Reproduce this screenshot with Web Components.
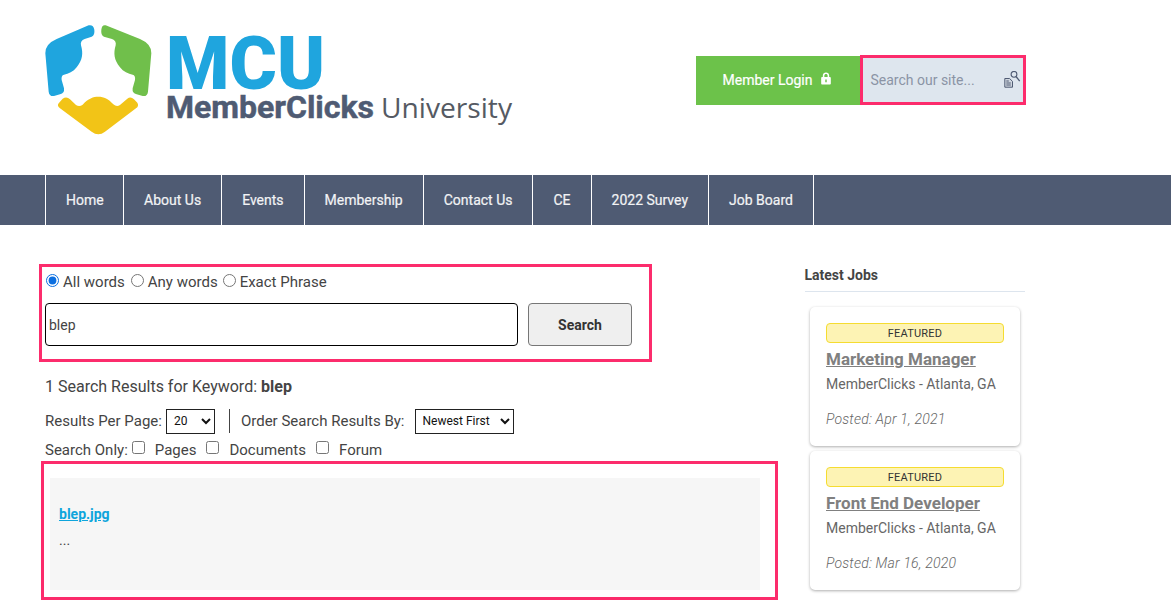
<!DOCTYPE html>
<html lang="en"><head><meta charset="utf-8"><title>MCU search</title>
<style>
html,body{margin:0;padding:0;background:#fff;overflow:hidden}
body{font-family:Roboto,"Liberation Sans",sans-serif;color:#444;height:600px}
</style></head><body>
<mc-header></mc-header>
<mc-nav>
  <mc-nav-item>Home</mc-nav-item><mc-nav-item>About Us</mc-nav-item><mc-nav-item>Events</mc-nav-item><mc-nav-item>Membership</mc-nav-item><mc-nav-item>Contact Us</mc-nav-item><mc-nav-item>CE</mc-nav-item><mc-nav-item>2022 Survey</mc-nav-item><mc-nav-item>Job Board</mc-nav-item>
</mc-nav>
<mc-main>
  <div slot="left">
    <mc-search-form></mc-search-form>
    <mc-result-controls></mc-result-controls>
    <mc-result></mc-result>
  </div>
  <mc-jobs slot="right">
    <mc-job-card title="Marketing Manager" posted="Posted: Apr 1, 2021"></mc-job-card>
    <mc-job-card title="Front End Developer" posted="Posted: Mar 16, 2020"></mc-job-card>
  </mc-jobs>
</mc-main>
<script>
function def(name,html,init){
  customElements.define(name,class extends HTMLElement{
    constructor(){super();this.attachShadow({mode:'open'}).innerHTML=html;}
    connectedCallback(){if(init)init.call(this,this.shadowRoot);}
  });
}
def('mc-logo',`<style>:host{display:block;width:480px;height:120px;margin:20px 0 0 -5px}svg{display:block}</style>
<svg width="480" height="120" viewBox="0 0 480 120">
 <g transform="scale(.3333)">
  <path fill="#1fa5de" d="M146 16Q160 13 163 29Q165 46 155 50L134 57Q120 62 123 76C130 100 128 120 110 142C100 155 85 162 72 164Q63 166 65 180L72 205Q74 220 60 223L42 228Q28 230 26 215L16 100Q15 72 50 57Z"/>
  <path fill="#70bf4b" d="M197 16Q186 13 184 29Q182 46 192 50L216 57Q230 62 227 76C220 100 222 120 240 142C250 155 265 162 278 164Q287 166 285 180L278 205Q276 220 290 223L308 228Q322 230 324 215L334 100Q335 72 300 57Z"/>
  <path fill="#f2c417" d="M68 236Q80 228 90 238L108 255Q118 262 128 254C145 235 160 230 175 230C192 230 205 236 220 253Q230 262 240 255L262 236Q272 228 282 238L292 248Q298 258 288 265L195 335Q175 350 155 335L60 265Q50 257 56 250Z"/>
 </g>
 <text x="126" y="69" font-family="Roboto" font-weight="900" font-size="75" fill="#1fa5de" textLength="159" lengthAdjust="spacingAndGlyphs">MCU</text>
 <text x="126" y="98" font-family="Roboto" font-weight="700" font-size="32" fill="#4f5b73" textLength="208" lengthAdjust="spacingAndGlyphs" stroke="#4f5b73" stroke-width=".5">MemberClicks</text>
 <text x="341" y="98" font-family="'Open Sans'" font-weight="400" font-size="28" fill="#555a63" textLength="131" lengthAdjust="spacingAndGlyphs">University</text>
</svg>`);
def('mc-header',`<style>
:host{display:block;height:175px}
.w{display:flex;padding-left:45px;height:175px}
.l{width:651px;flex:none}
.r{display:flex;margin-top:55px;height:50px}
.login{width:164px;height:49px;margin-top:1px;background:#6cc24a;color:#fff;font:400 14px Roboto,sans-serif;display:flex;align-items:center;justify-content:center;gap:9px;box-sizing:border-box;padding:0 2px 2px 0;-webkit-text-stroke:.2px #fff}
.login svg{margin-bottom:2px}
.s{width:166px;height:50px;box-sizing:border-box;border:3px solid #fc2c6c;background:#dee6ee;display:flex;align-items:center;padding-left:7.500px;position:relative}
.s span{font:14px Roboto,sans-serif;color:#8b94a5}
.s svg{position:absolute;left:141px;top:13px}
</style><div class="w"><div class="l"><mc-logo></mc-logo></div><div class="r">
<div class="login"><span>Member Login</span>
<svg width="10" height="13" viewBox="0 0 11 13" preserveAspectRatio="none"><path fill="#fff" fill-rule="evenodd" d="M2 5V3.600C2 1.600 3.500.4 5.500.4S9 1.600 9 3.600V5h.6c.7 0 1.200.5 1.200 1.200v5.200c0 .7-.5 1.200-1.200 1.200H1.400C.7 12.600.2 12.100.2 11.400V6.200C.2 5.500.7 5 1.400 5zM3.700 5h3.600V3.600c0-1-.8-1.600-1.800-1.600s-1.800.6-1.800 1.600zM4.700 7.500v2.800h1.600V7.500z"/></svg></div>
<div class="s"><span>Search our site...</span>
<svg width="17" height="17" viewBox="0 0 17 17" fill="none" stroke="#4f5b73"><path d="M.8 7.500h4.800l2.900 2.900v5.800H.8z" fill="#cfd6df"/><path d="M2.300 10h2.500M2.300 12h4.500M2.300 14h4.500" stroke-width="1"/><circle cx="10" cy="3.300" r="2.900" stroke-width="1.100"/><path d="M12 5.500l3.700 4.700" stroke-width="1.300"/></svg></div>
</div></div>`);
def('mc-nav',`<style>:host{display:block;background:#4f5b73;height:50px}
.w{display:flex;height:50px;padding-left:45px}
::slotted(mc-nav-item){border-right:1px solid #fff}
::slotted(mc-nav-item:first-child){border-left:1px solid #fff;padding-right:19.400px}
</style><div class="w"><slot></slot></div>`);
def('mc-nav-item',`<style>:host{display:flex;align-items:center;padding:0 20px;height:50px;color:#f2f3f5;font:400 14px Roboto,sans-serif;-webkit-text-stroke:.2px #f2f3f5}</style><slot></slot>`);
def('mc-main',`<style>:host{display:grid;grid-template-columns:760px 220px;padding:39px 0 0 45px;height:336px;box-sizing:border-box}</style><slot name="left"></slot><slot name="right"></slot>`);
def('mc-search-form',`<style>
:host{display:block;width:613px;height:98px;box-sizing:border-box;border:3px solid #fc2c6c;margin-left:-6px;padding:0 0 0 3px;font:15px Roboto,sans-serif;color:#444}
.r{display:flex;align-items:center;height:30px}
input[type=radio]{margin:0 4px 4px 1px;width:13px;height:13px;accent-color:#0b6fe0;flex:none}
label{display:flex;align-items:center}
.a input{margin-left:6px}.e input{margin-left:5px;margin-right:4px}
.f{display:flex;gap:10px;margin-top:6px}
.t{width:473px;height:43px;box-sizing:border-box;border:1px solid #000;border-radius:4px;padding:0 3px;font:14px Roboto,sans-serif;color:#444;outline:0}
button{width:104px;height:43px;background:#efefef;border:1px solid #767676;border-radius:4px;font:700 14px Roboto,sans-serif;color:#333;padding:0}
</style><div class="r"><label><input type="radio" name="m" checked>All words</label><label class="a"><input type="radio" name="m">Any words</label><label class="e"><input type="radio" name="m">Exact Phrase</label></div>
<div class="f"><input class="t" type="text" value="blep"><button>Search</button></div>`);
def('mc-result-controls',`<style>
:host{display:block;font:15px Roboto,sans-serif;color:#444;height:99px;box-sizing:border-box;padding-top:13px}
.h{font-size:16px;height:24px;line-height:24px}
.c{display:flex;align-items:center;height:26px;margin-top:9px}
select{font:12px Roboto,sans-serif;border:1px solid #222;border-radius:0;background:#fff;color:#111;height:25px;margin-left:4px;padding:0 0 0 3px;box-sizing:border-box}
.d{width:1px;height:24px;background:#444;margin:0 11px 0 14px}
.o{display:flex;align-items:center;height:23px;margin-top:4px}
input{margin:0 10px 5px 4px;width:13px;height:13px;flex:none}
.o span{margin-right:10px}
.o span+input{margin-left:0}
</style><div class="h">1 Search Results for Keyword: <b>blep</b></div>
<div class="c">Results Per Page:<select style="width:49px"><option>20</option></select><i class="d"></i>Order Search Results By:<select style="width:99px;margin-left:10px"><option>Newest First</option></select></div>
<div class="o">Search Only:<input type="checkbox"><span>Pages</span><input type="checkbox"><span>Documents</span><input type="checkbox"><span>Forum</span></div>`);
def('mc-result',`<style>
:host{display:block;width:737px;height:139px;box-sizing:border-box;border:3px solid #fc2c6c;margin-left:-4px;padding:14px 14px 0 6px}
.g{background:#f6f6f6;height:112px;width:710px;padding:26px 0 0 9px;box-sizing:border-box}
a{font:700 14px/20px Roboto,sans-serif;color:#0ea5dc;text-decoration:underline;display:block}
p{margin:6px 0 0;font:14px/20px Roboto,sans-serif;color:#444}
</style><div class="g"><a href="#">blep.jpg</a><p>...</p></div>`);
def('mc-jobs',`<style>
:host{display:block}
h3{margin:0;font:700 14px/20px Roboto,sans-serif;color:#444;height:26px;border-bottom:1px solid #dde5ee;padding-top:1px;margin-left:-.5px}
.l{display:flex;flex-direction:column;gap:5px;padding:15px 5px 0}
</style><h3>Latest Jobs</h3><div class="l"><slot></slot></div>`);
def('mc-job-card',`<style>
:host{display:block;height:139px;box-sizing:border-box;background:#fff;border-radius:5px;box-shadow:0 1px 3px rgba(0,0,0,.32);padding:16px}
.b{height:20px;box-sizing:border-box;background:#fdf3b4;border:1px solid #f5dc30;border-radius:4px;padding-top:1px;font:400 11px/17px Roboto,sans-serif;letter-spacing:.2px;color:#333;text-align:center}
.t{display:block;font:700 17px/22px Roboto,sans-serif;color:#808080;text-decoration:underline;margin-top:5px}
.m{font:14px/20px Roboto,sans-serif;color:#666;margin-top:4px}
.p{font:italic 300 14px/20px Roboto,sans-serif;letter-spacing:.2px;color:#666;margin-top:15px}
</style><div class="b">FEATURED</div><a class="t" href="#"></a><div class="m">MemberClicks - Atlanta, GA</div><div class="p"></div>`,function(s){
  s.querySelector('.t').textContent=this.getAttribute('title');
  s.querySelector('.p').textContent=this.getAttribute('posted');
});
</script>
</body></html>
